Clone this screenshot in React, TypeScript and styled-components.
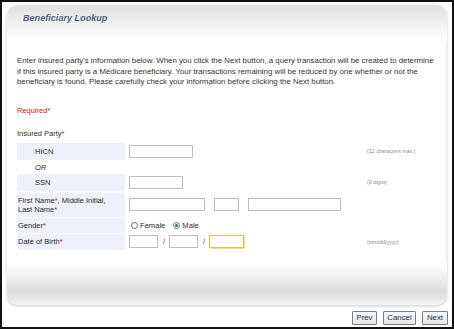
import React from "react";
import styled, { createGlobalStyle } from "styled-components";

const GlobalStyle = createGlobalStyle`
  html, body {
    margin: 0;
    padding: 0;
    background: #fff;
  }
  body {
    font-family: "Liberation Sans", Arial, sans-serif;
  }
`;

const Frame = styled.div`
  width: 454px;
  height: 329px;
  box-sizing: border-box;
  border: 2px solid #111;
  background: #fff;
  display: flex;
  flex-direction: column;
  font-size: 7.5px;
  color: #2a2a2a;
`;

const Panel = styled.section`
  margin: 3px 5px 0 5px;
  height: 300px;
  border-radius: 10px;
  background: #fff;
  box-shadow: 0 1px 3px rgba(0, 0, 0, 0.22), inset -2px 0 3px rgba(0, 0, 0, 0.05);
  display: flex;
  flex-direction: column;
  overflow: hidden;
`;

const Header = styled.header`
  height: 36px;
  box-sizing: border-box;
  padding: 6px 0 0 16px;
  background: linear-gradient(to bottom, #e0e0e0 0%, #eeeeee 45%, #ffffff 100%);
  border-radius: 10px 10px 0 0;
`;

const Title = styled.h1`
  margin: 0;
  font-size: 9.1px;
  line-height: 14px;
  font-weight: bold;
  font-style: italic;
  color: #51667f;
`;

const Body = styled.div`
  flex: 1;
  padding: 0 10px;
`;

const Intro = styled.p`
  margin: 15px 0 0 0;
  max-width: 421px;
  line-height: 10.6px;
  font-size: 7.85px;
  color: #333;
`;

const Required = styled.div`
  margin-top: 17px;
  line-height: 11px;
  color: #d01818;
`;

const Star = styled.span`
  color: #d01818;
`;

const Section = styled.div`
  margin-top: 12px;
  line-height: 11px;
`;

const Rows = styled.div`
  margin-top: 4px;
  display: flex;
  flex-direction: column;
`;

const Row = styled.div<{ $h: number; $gap?: number }>`
  display: grid;
  grid-template-columns: 108px 241px auto;
  height: ${(p) => p.$h}px;
  margin-top: ${(p) => p.$gap ?? 0}px;
`;

const Label = styled.div<{ $indent?: boolean; $plain?: boolean; $italic?: boolean }>`
  background: ${(p) => (p.$plain ? "transparent" : "#eef0fb")};
  display: flex;
  align-items: center;
  padding-left: ${(p) => (p.$indent ? 18 : 1)}px;
  font-style: ${(p) => (p.$italic ? "italic" : "normal")};
  line-height: 9px;
`;

const Field = styled.div`
  display: flex;
  align-items: center;
  padding-left: 4px;
`;

const Hint = styled.div`
  display: flex;
  align-items: center;
  padding-left: 1px;
  font-size: 5.3px;
  color: #8a8a8a;
`;

const Input = styled.div<{ $w: number; $focus?: boolean }>`
  width: ${(p) => p.$w}px;
  height: 13px;
  box-sizing: border-box;
  border: 1px solid ${(p) => (p.$focus ? "#e2bf4c" : "#bdbdbd")};
  box-shadow: ${(p) => (p.$focus ? "0 0 1px 0.5px #f0dc8e" : "none")};
  background: #fff;
  margin-right: 9px;
`;

const Slash = styled.span`
  margin: 0 4px 0 -4px;
  font-size: 7px;
  color: #333;
`;

const RadioLabel = styled.label`
  display: flex;
  align-items: center;
  margin-right: 6px;
  margin-left: 2px;
  font-size: 7.6px;
`;

const RadioDot = styled.span<{ $on?: boolean }>`
  width: 7px;
  height: 7px;
  box-sizing: border-box;
  border-radius: 50%;
  border: 1px solid ${(p) => (p.$on ? "#3f8f6a" : "#666")};
  margin-right: 2px;
  display: inline-flex;
  align-items: center;
  justify-content: center;
  &::after {
    content: "";
    width: 3px;
    height: 3px;
    border-radius: 50%;
    background: ${(p) => (p.$on ? "#2f6f50" : "transparent")};
  }
`;

const Footer = styled.footer`
  height: 42px;
  background: linear-gradient(
    to bottom,
    #ffffff 0%,
    #f4f4f4 25%,
    #dedede 65%,
    #e6e6e6 85%,
    #f6f6f6 100%
  );
  border-radius: 0 0 10px 10px;
`;

const ButtonBar = styled.div`
  display: flex;
  justify-content: flex-end;
  gap: 6px;
  padding: 6px 4px 0 0;
`;

const Button = styled.button<{ $w: number }>`
  width: ${(p) => p.$w}px;
  height: 14px;
  padding: 0;
  box-sizing: border-box;
  border: 1px solid #6f7f98;
  border-radius: 1px;
  background: linear-gradient(to bottom, #fdfdfd, #e4e4e4);
  font-family: "Liberation Sans", Arial, sans-serif;
  font-size: 7.8px;
  color: #1c2a44;
  line-height: 12px;
`;

export default function App() {
  return (
    <Frame>
      <GlobalStyle />
      <Panel>
        <Header>
          <Title>Beneficiary Lookup</Title>
        </Header>
        <Body>
          <Intro>
            Enter insured party's information below. When you click the Next button, a query
            transaction will be created to determine if this insured party is a Medicare
            beneficiary. Your transactions remaining will be reduced by one whether or not the
            beneficiary is found. Please carefully check your information before clicking the
            Next button.
          </Intro>
          <Required>Required*</Required>
          <Section>
            Insured Party<Star>*</Star>
          </Section>
          <Rows>
            <Row $h={17}>
              <Label $indent>HICN</Label>
              <Field>
                <Input $w={64} />
              </Field>
              <Hint>(12 characters max.)</Hint>
            </Row>
            <Row $h={13} $gap={1}>
              <Label $indent $plain $italic>
                OR
              </Label>
              <Field />
              <Hint />
            </Row>
            <Row $h={17}>
              <Label $indent>SSN</Label>
              <Field>
                <Input $w={54} />
              </Field>
              <Hint>(9 digits)</Hint>
            </Row>
            <Row $h={24} $gap={2}>
              <Label>
                <span>
                  First Name<Star>*</Star>, Middle Initial,
                  <br />
                  Last Name<Star>*</Star>
                </span>
              </Label>
              <Field>
                <Input $w={76} />
                <Input $w={25} />
                <Input $w={93} />
              </Field>
              <Hint />
            </Row>
            <Row $h={15} $gap={1}>
              <Label>
                Gender<Star>*</Star>
              </Label>
              <Field>
                <RadioLabel>
                  <RadioDot />
                  Female
                </RadioLabel>
                <RadioLabel>
                  <RadioDot $on />
                  Male
                </RadioLabel>
              </Field>
              <Hint />
            </Row>
            <Row $h={16} $gap={1}>
              <Label>
                Date of Birth<Star>*</Star>
              </Label>
              <Field>
                <Input $w={29} />
                <Slash>/</Slash>
                <Input $w={29} />
                <Slash>/</Slash>
                <Input $w={35} $focus />
              </Field>
              <Hint>(mm/dd/yyyy)</Hint>
            </Row>
          </Rows>
        </Body>
        <Footer />
      </Panel>
      <ButtonBar>
        <Button $w={25}>Prev</Button>
        <Button $w={33}>Cancel</Button>
        <Button $w={26}>Next</Button>
      </ButtonBar>
    </Frame>
  );
}
